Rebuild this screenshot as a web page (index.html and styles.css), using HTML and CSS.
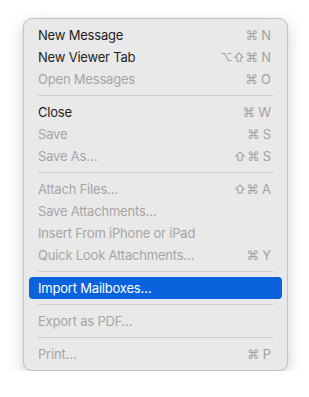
FILE: index.html
```html
<!DOCTYPE html>
<html lang="en">
<head>
    <meta charset="UTF-8">
    <meta name="viewport" content="width=device-width, initial-scale=1.0">
    <title>File Menu</title>
    <link rel="stylesheet" href="styles.css">
</head>
<body>
    <div class="menu">
        <div class="item"><span class="label">New Message</span><span class="keys"><i>⌘</i>N</span></div>
        <div class="item"><span class="label">New Viewer Tab</span><span class="keys"><svg class="mod" width="11" height="10" viewBox="0 0 11 10"><path d="M0.5 1.5 H3.6 L7.4 8.5 H10.5 M6.6 1.5 H10.5"/></svg><svg class="mod" width="10" height="10" viewBox="0 0 10 10"><path d="M5 0.8 L9.3 5.3 H7 V9.2 H3 V5.3 H0.7 Z"/></svg><i>⌘</i>N</span></div>
        <div class="item off"><span class="label">Open Messages</span><span class="keys"><i>⌘</i>O</span></div>
        <div class="sep"></div>
        <div class="item"><span class="label">Close</span><span class="keys"><i>⌘</i>W</span></div>
        <div class="item off"><span class="label">Save</span><span class="keys"><i>⌘</i>S</span></div>
        <div class="item off"><span class="label">Save As…</span><span class="keys"><svg class="mod" width="10" height="10" viewBox="0 0 10 10"><path d="M5 0.8 L9.3 5.3 H7 V9.2 H3 V5.3 H0.7 Z"/></svg><i>⌘</i>S</span></div>
        <div class="sep"></div>
        <div class="item off"><span class="label">Attach Files…</span><span class="keys"><svg class="mod" width="10" height="10" viewBox="0 0 10 10"><path d="M5 0.8 L9.3 5.3 H7 V9.2 H3 V5.3 H0.7 Z"/></svg><i>⌘</i>A</span></div>
        <div class="item off"><span class="label">Save Attachments…</span></div>
        <div class="item off"><span class="label">Insert From iPhone or iPad</span></div>
        <div class="item off"><span class="label">Quick Look Attachments…</span><span class="keys"><i>⌘</i>Y</span></div>
        <div class="sep"></div>
        <div class="item active"><span class="label">Import Mailboxes…</span></div>
        <div class="sep"></div>
        <div class="item off"><span class="label">Export as PDF…</span></div>
        <div class="sep"></div>
        <div class="item off"><span class="label">Print…</span><span class="keys"><i>⌘</i>P</span></div>
    </div>
</body>
</html>
```

FILE: styles.css
```css
body {
    margin: 0;
    background-color: #ffffff;
    font-family: Inter, "Noto Sans", sans-serif;
    font-size: 13px;
}
.menu {
    width: 253px;
    margin: 18px 0 0 23px;
    padding: 5px 5px;
    background-color: #e9e9e9;
    border: 1px solid #c4c4c4;
    border-radius: 9px;
    box-shadow: 0px 6px 16px rgba(0, 0, 0, 0.18), 0px 0px 2px rgba(0, 0, 0, 0.08);
}
.item {
    display: flex;
    align-items: center;
    justify-content: space-between;
    height: 22px;
    padding: 0 11px 0 9px;
    border-radius: 4px;
    color: #1f1f1f;
    letter-spacing: -0.2px;
}
.item.off {
    color: #a6a6a6;
}
.item.active {
    background-color: #0a63dc;
    color: #ffffff;
}
.keys {
    display: flex;
    align-items: center;
    color: #a3a3a3;
    font-size: 13px;
    letter-spacing: 0;
}
.keys i {
    font-style: normal;
    font-family: "DejaVu Sans", sans-serif;
    font-size: 12.5px;
    margin-right: 3px;
}
.keys .mod {
    margin-right: 2px;
    fill: none;
    stroke: #a3a3a3;
    stroke-width: 1.1;
    stroke-linejoin: round;
}
.sep {
    height: 1px;
    margin: 5px 9px 5px 9px;
    background-color: #cdcdcd;
}
```
